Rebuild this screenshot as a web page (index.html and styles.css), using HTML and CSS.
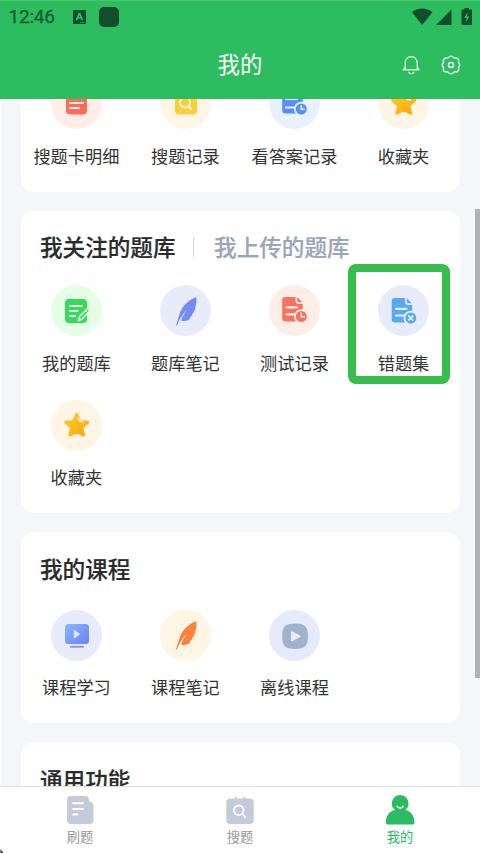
FILE: index.html
```html
<!DOCTYPE html>
<html lang="zh-CN">
<head>
<meta charset="utf-8">
<title>我的</title>
<link rel="stylesheet" href="styles.css">
</head>
<body>
<svg class="defs" width="0" height="0" aria-hidden="true">
  <defs>
    <linearGradient id="gold" x1="0" y1="0" x2="1" y2="1"><stop offset="0" stop-color="#ffca28"/><stop offset="1" stop-color="#ffa60c"/></linearGradient>
    <linearGradient id="screen" x1="0" y1="0" x2="1" y2="1"><stop offset="0" stop-color="#8db7ff"/><stop offset="1" stop-color="#6c7ff0"/></linearGradient>
    <symbol id="star" viewBox="0 0 51 51">
      <path d="M25.7 14L29.1 21.2L37 22.2L31.1 27.6L32.7 35.3L25.7 31.5L18.7 35.3L20.3 27.6L14.4 22.2L22.3 21.2Z" fill="url(#gold)" stroke="url(#gold)" stroke-width="2.6" stroke-linejoin="round"/>
      <path d="M27.2 18.3Q28.2 21.7 32 21.8" fill="none" stroke="#fff5e5" stroke-width="1.8" stroke-linecap="round"/>
    </symbol>
    <symbol id="doc" viewBox="0 0 51 51">
      <path d="M16.5 12H26.5V15.5Q26.5 19 30 19H33.7V35Q33.7 36.5 32 36.5H16.5Q13.2 36.5 13.2 33.5V15Q13.2 12 16.5 12Z" fill="currentColor"/>
      <path d="M28.2 12L33.2 17.2H30Q28.2 17.2 28.2 15.5Z" fill="currentColor"/>
    </symbol>
    <symbol id="feather" viewBox="0 0 51 51">
      <path d="M36.3 12C30.5 14 24.5 19 21.5 24.5C18.8 29.5 18.8 33.5 16 40.2L17 40.4C19 35 22.4 29.5 27 24.6C24.4 29 22 32 21.2 35.4C24 36.8 28.5 36 30.6 32.8L29.8 32.3L32.8 30L31.9 29.5C33.8 27.5 34.7 25.5 35.2 23.2C36.1 19.5 36.9 15.6 36.3 12Z" fill="currentColor"/>
    </symbol>
  </defs>
</svg>

<div class="app">
  <header class="header">
    <div class="status">
      <span class="clock">12:46</span>
      <svg class="status-a" viewBox="0 0 13 14"><rect width="13" height="14" rx="1" fill="#124e2a"/><path d="M3.5 10.3L6.2 3.6H6.8L9.5 10.3M4.6 8H8.4" fill="none" stroke="#2fc065" stroke-width="1.7"/><path d="M7 12.4H12" stroke="#2b8b4e" stroke-width="1"/></svg>
      <span class="status-block"></span>
      <svg class="status-right" viewBox="0 0 60 18">
        <path d="M0 4.2C6-.8 14.5-.8 20.5 4.2L10.2 17Z" fill="#124e2a"/>
        <path d="M39.5 1.5V17H24Z" fill="#124e2a"/>
        <path d="M52.5 0H57V1.6H59Q60 1.6 60 2.6V16Q60 17 59 17H50.5Q49.5 17 49.5 16V2.6Q49.5 1.6 50.5 1.6H52.5Z" fill="#124e2a"/>
        <path d="M55.8 4L52.3 10H54.6L53.8 14.3L57.5 8.4H55.2Z" fill="#2dbd60"/>
      </svg>
    </div>
    <div class="title-bar">
      <h1>我的</h1>
      <div class="actions">
        <svg width="20" height="20" viewBox="0 0 20 20"><path d="M4.2 14.8V8.5C4.2 4.5 6.5 1.7 10.2 1.7S16.2 4.5 16.2 8.5V14.8M2.2 14.8H18.2L16.2 12.2M2.2 14.8L4.2 12.2M7.6 17.2C8.4 19 11.9 19 12.8 17.2" fill="none" stroke="#e4f8ea" stroke-width="1.2" stroke-linecap="round" stroke-linejoin="round"/></svg>
        <svg width="20" height="20" viewBox="0 0 20 20"><path d="M7.3 2.6Q10 -.4 12.7 2.6Q13.3 3.4 14.4 3.2Q18 2.8 17.6 6.6Q17.4 7.6 18 8.3Q19.4 10 18 11.7Q17.4 12.4 17.6 13.4Q18 17.2 14.4 16.8Q13.3 16.6 12.7 17.4Q10 20.4 7.3 17.4Q6.7 16.6 5.6 16.8Q2 17.2 2.4 13.4Q2.6 12.4 2 11.7Q.6 10 2 8.3Q2.6 7.6 2.4 6.6Q2 2.8 5.6 3.2Q6.7 3.4 7.3 2.6Z" fill="none" stroke="#e4f8ea" stroke-width="1.4"/><circle cx="10" cy="10" r="2.5" fill="none" stroke="#e4f8ea" stroke-width="1.5"/></svg>
      </div>
    </div>
  </header>

  <main class="content">
    <section class="card card-clipped">
      <div class="grid">
        <a class="item"><span class="disc rose"><svg viewBox="0 0 51 51"><rect x="15" y="12" width="21" height="24.5" rx="4" fill="#fe6c59"/><path d="M19 19.5H32M19 25H32M19 30H28" stroke="#fff0ed" stroke-width="1.8" stroke-linecap="round"/></svg></span><span class="label">搜题卡明细</span></a>
        <a class="item"><span class="disc cream"><svg viewBox="0 0 51 51"><rect x="15" y="13" width="22" height="23.5" rx="4" fill="#fccd3d"/><circle cx="25" cy="24.5" r="5" fill="none" stroke="#fff5df" stroke-width="1.8"/><path d="M28.6 28.2L31.3 31" stroke="#fff5df" stroke-width="1.8" stroke-linecap="round"/></svg></span><span class="label">搜题记录</span></a>
        <a class="item"><span class="disc ice"><svg class="blue" viewBox="0 0 51 51"><use href="#doc" y="-1"/><path d="M17 21H28M17 29.5H27" stroke="#e9f0ff" stroke-width="2.2" stroke-linecap="round"/><circle cx="32.3" cy="31" r="6.4" fill="#568ffa" stroke="#e9f0ff" stroke-width="1.8"/><path d="M32.3 27.3V31.2H35.7" fill="none" stroke="#e9f0ff" stroke-width="1.6"/></svg></span><span class="label">看答案记录</span></a>
        <a class="item"><span class="disc cream"><svg><use href="#star"/></svg></span><span class="label">收藏夹</span></a>
      </div>
    </section>

    <section class="card">
      <div class="tabs"><h2>我关注的题库</h2><i class="divider"></i><h2 class="muted">我上传的题库</h2></div>
      <div class="grid">
        <a class="item"><span class="disc mint"><svg viewBox="0 0 51 51"><rect x="14" y="14" width="22" height="24" rx="4" fill="#39d960"/><path d="M19 21H31M19 26H26.5M19 31H24" stroke="#e5ffe6" stroke-width="1.9" stroke-linecap="round"/><path d="M27.2 35.8L28.6 31.5L36.3 23.8Q37.5 23.3 38.4 25Q38.8 26 38 26.8L31 34Z" fill="#39d960" stroke="#e5ffe6" stroke-width="1.5" stroke-linejoin="round"/><path d="M34.5 25.6L36.8 27.8" stroke="#e5ffe6"/></svg></span><span class="label">我的题库</span></a>
        <a class="item"><span class="disc lilac"><svg class="indigo"><use href="#feather"/></svg></span><span class="label">题库笔记</span></a>
        <a class="item"><span class="disc rose"><svg class="red" viewBox="0 0 51 51"><use href="#doc"/><path d="M17.5 22.3H28M17.5 29.3H26" stroke="#ffede8" stroke-width="2.2" stroke-linecap="round"/><circle cx="32.3" cy="31.5" r="6.4" fill="#f8725d" stroke="#ffede8" stroke-width="1.8"/><path d="M32.3 27.8V31.7H36" fill="none" stroke="#ffede8" stroke-width="1.6"/></svg></span><span class="label">测试记录</span></a>
        <a class="item marked"><span class="disc lilac"><svg class="sky" viewBox="0 0 51 51"><use href="#doc" x="0.5" y="1"/><path d="M18 23.8H28.5M18 30.5H26.5" stroke="#e8ebf9" stroke-width="2.2" stroke-linecap="round"/><circle cx="32.8" cy="33" r="6.4" fill="#57a9f3" stroke="#e8ebf9" stroke-width="1.8"/><path d="M30.3 30.5L35.3 35.5M35.3 30.5L30.3 35.5" stroke="#fff" stroke-width="1.5"/></svg></span><span class="label">错题集</span></a>
        <a class="item"><span class="disc cream"><svg><use href="#star"/></svg></span><span class="label">收藏夹</span></a>
      </div>
    </section>

    <section class="card card-roomy">
      <div class="tabs"><h2>我的课程</h2></div>
      <div class="grid">
        <a class="item"><span class="disc lilac"><svg viewBox="0 0 51 51"><rect x="14" y="14" width="24" height="20" rx="3.5" fill="url(#screen)"/><path d="M23.3 20.3V28L28.5 24.1Z" fill="#dde6ff" stroke="#dde6ff" stroke-linejoin="round"/><path d="M20 36.8H32" stroke="#8397f3" stroke-width="2" stroke-linecap="round"/></svg></span><span class="label">课程学习</span></a>
        <a class="item"><span class="disc cream"><svg class="orange"><use href="#feather" y="-1"/></svg></span><span class="label">课程笔记</span></a>
        <a class="item"><span class="disc lavender"><svg viewBox="0 0 51 51"><path d="M26 13.5C36 13.5 39 16.5 39 26.3S36 39 26 39S13.2 36 13.2 26.3S16 13.5 26 13.5Z" fill="#9fb3cd"/><path d="M22.7 22V30.5L30.8 26.2Z" fill="#e7eafa" stroke="#e7eafa" stroke-width="1.6" stroke-linejoin="round"/></svg></span><span class="label">离线课程</span></a>
      </div>
    </section>

    <section class="card card-roomy">
      <div class="tabs"><h2>通用功能</h2></div>
    </section>
  </main>

  <nav class="tabbar">
    <a class="tab"><svg viewBox="0 0 30 30"><path d="M5.5 1H20Q24 1 24 5V6.5Q28.5 7 28.5 11V25Q28.5 29 24.5 29H6Q2 29 2 25V5Q2 1 5.5 1Z" fill="#c4cbd8"/><path d="M8 8.3H18M8 14H18M8 19.5H12.5" stroke="#fff" stroke-width="1.9" stroke-linecap="round"/></svg><span>刷题</span></a>
    <a class="tab"><svg viewBox="0 0 30 30"><rect x="1.3" y="3.5" width="27.4" height="25.5" rx="4" fill="#c4cbd8"/><path d="M10.8 2.3V5M19.4 2.3V5" stroke="#c4cbd8" stroke-width="1.8" stroke-linecap="round"/><circle cx="13.8" cy="15.3" r="4.8" fill="none" stroke="#fff" stroke-width="1.8"/><path d="M17.3 19L20.3 22.3" stroke="#fff" stroke-width="1.8" stroke-linecap="round"/></svg><span>搜题</span></a>
    <a class="tab active"><svg viewBox="0 0 30 30"><path d="M15.2 0A8.5 8.5 0 0 1 20.3 15.1C26 16 29.2 21 29.5 27Q29.5 29.6 27 29.6H3.3Q.8 29.6.8 27C1.1 21 4.5 16 10 15.1A8.5 8.5 0 0 1 15.2 0Z" fill="#2dbb61"/><path d="M12 11.2Q15.2 14.7 18.4 11.2" fill="none" stroke="#fff" stroke-width="1.4" stroke-linecap="round"/></svg><span>我的</span></a>
  </nav>
  <div class="scrollbar"></div>
  <svg class="corner" viewBox="0 0 4 5"><path d="M0 0V5H4Z" fill="#4b3940"/></svg>
</div>
</body>
</html>
```

FILE: styles.css
```css
*, *::after { box-sizing: border-box; }
body {
  margin: 0;
  font-family: "Noto Sans CJK SC", sans-serif;
  color: #333;
}
h1, h2 { margin: 0; }
.defs { position: absolute; }

.app {
  position: relative;
  display: flex;
  flex-direction: column;
  width: 480px;
  height: 853px;
  overflow: hidden;
  background: #f5f6f9;
}

/* Header */
.header {
  flex: none;
  position: relative;
  height: 98.5px;
  background: #2dbd60;
  border-top: 1px solid #49c777;
}
.status {
  display: flex;
  align-items: center;
  height: 31px;
  padding: 0 8px 0 8.5px;
}
.clock {
  width: 64.5px;
  font: 400 19px/30px Roboto, sans-serif;
  color: #155c31;
  letter-spacing: -.2px;
  -webkit-text-stroke: .3px #155c31;
}
.status-a { width: 13px; height: 14px; }
.status-block {
  width: 20px;
  height: 20px;
  margin-left: 13px;
  border-radius: 5px;
  background: #124e2a;
}
.status-right { width: 60px; height: 18px; margin-left: auto; }
.title-bar {
  display: grid;
  grid-template-columns: 1fr auto 1fr;
  align-items: center;
  height: 66px;
  padding-right: 19px;
}
.title-bar h1 {
  grid-column: 2;
  margin-left: 19px;
  padding-bottom: 5px;
  font-size: 22.4px;
  font-weight: 400;
  line-height: 32px;
  color: #fff;
}
.actions { display: flex; justify-content: flex-end; gap: 20px; }

/* Cards */
.content {
  flex: 1;
  min-height: 0;
  overflow: hidden;
  padding: 0 20.5px 0 21px;
  box-shadow: inset 1.5px 0 #fcfcfd;
}
.card {
  margin-bottom: 19px;
  padding: 20px 1.5px 23px .9px;
  border-radius: 13px;
  background: #fff;
}
.card-clipped { margin-top: -40.5px; }
.card-roomy { padding-top: 21.3px; }
.card-roomy .tabs { margin-bottom: 23.7px; }
.tabs {
  display: flex;
  align-items: center;
  height: 33px;
  margin-bottom: 21.5px;
  padding-left: 18.1px;
}
.tabs h2 {
  padding-bottom: 2px;
  font-size: 22.6px;
  line-height: 31px;
  font-weight: 500;
  color: #2b2b2b;
  -webkit-text-stroke: .2px currentColor;
  white-space: nowrap;
}
.tabs .muted { color: #9aa6b7; }
.divider { width: 1px; height: 20px; margin: 0 20px 0 17.5px; background: #cfd3da; }
.grid {
  display: grid;
  grid-template-columns: repeat(4, 1fr);
  row-gap: 24px;
}
.item {
  position: relative;
  display: flex;
  flex-direction: column;
  align-items: center;
  gap: 14.5px;
  padding-bottom: 1px;
}
.disc { width: 51px; height: 51px; border-radius: 50%; }
.disc svg { display: block; width: 51px; height: 51px; }
.label {
  font-size: 17.2px;
  line-height: 24px;
  white-space: nowrap;
}
.rose { background: #ffede8; }
.cream { background: #fff5e5; }
.ice { background: #e9f0ff; }
.mint { background: #e5ffe6; }
.lilac { background: #e8ebf9; }
.lavender { background: #e7eafa; }
.blue { color: #568ffa; }
.red { color: #f8725d; }
.sky { color: #57a9f3; }
.indigo { color: #738bf5; }
.orange { color: #fa823c; }
.marked::after {
  content: "";
  position: absolute;
  left: -1.4px;
  top: -21.5px;
  width: 102.5px;
  height: 120.5px;
  border: 8.5px solid #36bd4b;
  border-radius: 8px;
}

/* Bottom navigation */
.tabbar {
  flex: none;
  display: flex;
  height: 67.5px;
  border-top: 1.5px solid #dfdfdf;
  background: #fff;
}
.tab {
  flex: 1;
  display: flex;
  flex-direction: column;
  align-items: center;
  padding-top: 8.5px;
  font-size: 13.3px;
  line-height: 20px;
  color: #999;
}
.tab svg { width: 30px; height: 30px; margin-bottom: 2px; }
.active { color: #2dbb61; }

.scrollbar {
  position: absolute;
  right: 0;
  top: 209px;
  width: 5px;
  height: 468.5px;
  background: #b1b2b3;
}
.corner { position: absolute; left: 0; bottom: 0; width: 4px; height: 4px; }
```
